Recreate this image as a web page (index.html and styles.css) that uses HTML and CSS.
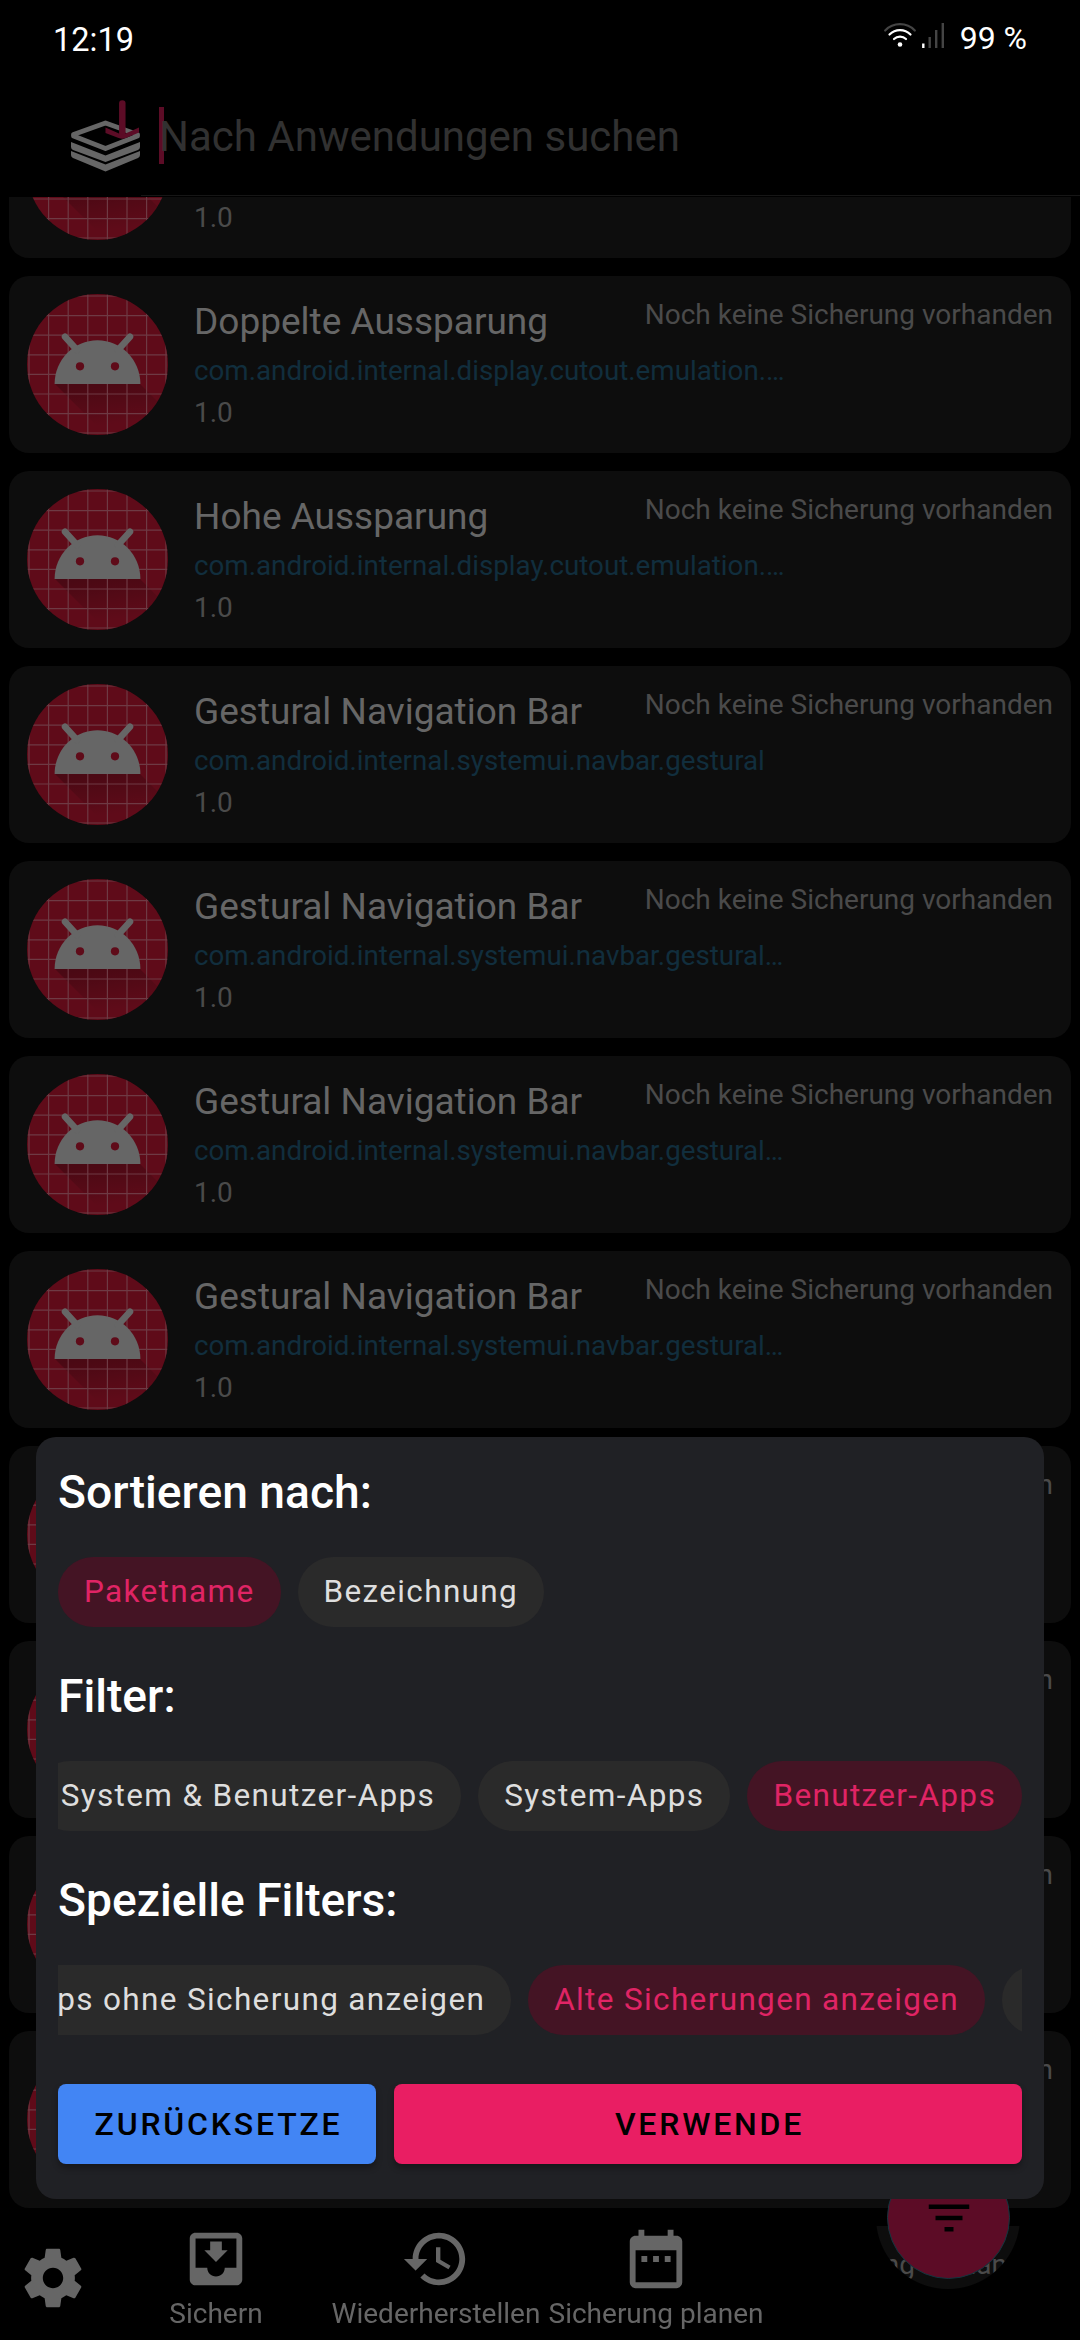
FILE: index.html
```html
<!DOCTYPE html>
<html lang="de">
<head>
<meta charset="utf-8">
<title>Sicherung</title>
<link rel="stylesheet" href="styles.css">
</head>
<body>
<svg class="defs" width="0" height="0">
  <defs>
    <clipPath id="round"><circle cx="70.5" cy="70.5" r="70.5"/></clipPath>
    <linearGradient id="shade" x1="0.3" y1="0" x2="0.5" y2="0.8"><stop offset="0" stop-color="#000" stop-opacity=".22"/><stop offset="1" stop-color="#000" stop-opacity="0"/></linearGradient>
    <symbol id="droid" viewBox="0 0 141 141">
      <g clip-path="url(#round)">
        <rect width="141" height="141" fill="#5f0b19"/>
        <path d="M28 90L79 141H141V118L113 90Z" fill="url(#shade)"/>
        <path d="M2 0V141M21.6 0V141M41.2 0V141M60.8 0V141M80.4 0V141M100 0V141M119.6 0V141M139 0V141M0 2H141M0 21.6H141M0 41.2H141M0 60.8H141M0 80.4H141M0 100H141M0 119.6H141M0 139H141" stroke="#6e3a44" stroke-width="1.2" fill="none"/>
      </g>
      <path d="M27.6 90C27.6 66 46.800 46.300 70.500 46.300S113.400 66 113.400 90Z" fill="#666"/>
      <path d="M38 42.700L50 56M103 42.700L91 56" stroke="#666" stroke-width="6.500" stroke-linecap="round"/>
      <circle cx="53" cy="72.300" r="4.100" fill="#5f0b19"/><circle cx="88" cy="72.300" r="4.100" fill="#5f0b19"/>
    </symbol>
  </defs>
</svg>
<div class="screen">
  <header class="status">
    <span class="clock">12:19</span>
    <svg class="radio" width="62" height="28" viewBox="0 0 62 28" fill="none" stroke-linecap="round">
      <path d="M1.200 8.500A20.500 20.500 0 0 1 30.800 8.500" stroke="#444" stroke-width="2.200"/>
      <path d="M5.500 12.500A14.800 14.800 0 0 1 26.500 12.500M10 17A8.600 8.600 0 0 1 22 17" stroke="#fff" stroke-width="2.200"/>
      <circle cx="16" cy="22.500" r="2.300" fill="#fff"/>
      <path d="M39.300 21.500V26" stroke="#fff" stroke-width="2.400" stroke-linecap="butt"/>
      <path d="M45.700 15V26M52.200 8V26M58.800 1V26" stroke="#444" stroke-width="2.400" stroke-linecap="butt"/>
    </svg>
    <span class="battery">99 %</span>
  </header>
  <div class="search">
    <svg class="logo" width="72" height="72" viewBox="0 0 72 72" fill="none">
      <path d="M3.500 36V34.500L35.500 23L67.500 34.500V36L35.500 48.500Z" stroke="#666" stroke-width="4.800" stroke-linejoin="round"/>
      <path d="M1 42L35.500 55.500L70 42V47Q70 49 68 50L35.500 62L3 50Q1 49 1 47Z" fill="#666"/>
      <path d="M1 51L35.500 64.500L70 51V55Q70 57 68 58L35.500 71.500L3 58Q1 57 1 55Z" fill="#666"/>
      <path d="M52.300 3.500V34" stroke="#5c0c26" stroke-width="6.500" stroke-linecap="round"/>
      <path d="M35.500 27.500L49 33.500Q52.300 35 55.600 33.500L69 27.500V32.500L56 38Q52.300 39.300 48.600 38L35.500 33Z" fill="#5c0c26"/>
    </svg>
    <span class="cursor"></span><span class="hint">Nach Anwendungen suchen</span>
  </div>
  <main class="list">
    <article class="card"><svg class="avatar"><use href="#droid"/></svg><div class="info tail"><p class="ver">1.0</p></div></article>
    <article class="card"><svg class="avatar"><use href="#droid"/></svg><div class="info"><h2>Doppelte Aussparung</h2><p class="pkg">com.android.internal.display.cutout.emulation.…</p><p class="ver">1.0</p></div><p class="note">Noch keine Sicherung vorhanden</p></article>
    <article class="card"><svg class="avatar"><use href="#droid"/></svg><div class="info"><h2>Hohe Aussparung</h2><p class="pkg">com.android.internal.display.cutout.emulation.…</p><p class="ver">1.0</p></div><p class="note">Noch keine Sicherung vorhanden</p></article>
    <article class="card"><svg class="avatar"><use href="#droid"/></svg><div class="info"><h2>Gestural Navigation Bar</h2><p class="pkg">com.android.internal.systemui.navbar.gestural</p><p class="ver">1.0</p></div><p class="note">Noch keine Sicherung vorhanden</p></article>
    <article class="card"><svg class="avatar"><use href="#droid"/></svg><div class="info"><h2>Gestural Navigation Bar</h2><p class="pkg">com.android.internal.systemui.navbar.gestural…</p><p class="ver">1.0</p></div><p class="note">Noch keine Sicherung vorhanden</p></article>
    <article class="card"><svg class="avatar"><use href="#droid"/></svg><div class="info"><h2>Gestural Navigation Bar</h2><p class="pkg">com.android.internal.systemui.navbar.gestural…</p><p class="ver">1.0</p></div><p class="note">Noch keine Sicherung vorhanden</p></article>
    <article class="card"><svg class="avatar"><use href="#droid"/></svg><div class="info"><h2>Gestural Navigation Bar</h2><p class="pkg">com.android.internal.systemui.navbar.gestural…</p><p class="ver">1.0</p></div><p class="note">Noch keine Sicherung vorhanden</p></article>
    <article class="card"><svg class="avatar"><use href="#droid"/></svg><p class="note">Noch keine Sicherung vorhanden</p></article>
    <article class="card"><svg class="avatar"><use href="#droid"/></svg><p class="note">Noch keine Sicherung vorhanden</p></article>
    <article class="card"><svg class="avatar"><use href="#droid"/></svg><p class="note">Noch keine Sicherung vorhanden</p></article>
    <article class="card"><svg class="avatar"><use href="#droid"/></svg><p class="note">Noch keine Sicherung vorhanden</p></article>
    <article class="card"><p class="note">Noch keine Sicherung vorhanden</p></article>
  </main>
  <nav class="bar">
    <svg class="gear" width="70" height="70" viewBox="0 0 24 24" fill="#666"><path d="M19.430 12.980c.04-.32.07-.64.07-.98s-.03-.66-.07-.98l2.110-1.650c.19-.15.24-.42.12-.64l-2-3.460c-.12-.22-.39-.3-.61-.22l-2.490 1c-.52-.4-1.080-.73-1.690-.98l-.38-2.650C14.460 2.180 14.250 2 14 2h-4c-.25 0-.46.18-.49.42l-.38 2.650c-.61.25-1.170.59-1.690.98l-2.490-1c-.23-.09-.49 0-.61.22l-2 3.460c-.13.22-.07.49.12.64l2.110 1.650c-.04.32-.07.65-.07.98s.03.66.07.98l-2.110 1.650c-.19.15-.24.42-.12.64l2 3.460c.12.22.39.3.61.22l2.490-1c.52.4 1.080.73 1.690.98l.38 2.650c.03.24.24.42.49.42h4c.25 0 .46-.18.49-.42l.38-2.650c.61-.25 1.170-.59 1.690-.98l2.490 1c.23.09.49 0 .61-.22l2-3.460c.12-.22.07-.49-.12-.64l-2.110-1.650zM12 15.500c-1.930 0-3.500-1.570-3.500-3.500s1.570-3.500 3.500-3.500 3.500 1.570 3.500 3.500-1.570 3.500-3.500 3.500z"/></svg>
    <div class="tabs">
      <a class="tab"><svg width="70" height="70" viewBox="0 0 24 24" fill="#666"><path d="M16 9h-2V6h-4v3H8l4 4 4-4zm3-6H4.990C3.880 3 3 3.900 3 5v14c0 1.100.88 2 1.990 2H19c1.100 0 2-.9 2-2V5c0-1.100-.9-2-2-2zm0 12h-4c0 1.660-1.350 3-3 3s-3-1.340-3-3H4.990V5H19v10z"/></svg>Sichern</a>
      <a class="tab"><svg width="70" height="70" viewBox="0 0 24 24" fill="#666"><path d="M13 3c-4.970 0-9 4.030-9 9H1l3.890 3.890.07.14L9 12H6c0-3.870 3.130-7 7-7s7 3.130 7 7-3.130 7-7 7c-1.930 0-3.680-.79-4.940-2.060l-1.420 1.420C8.270 19.990 10.510 21 13 21c4.970 0 9-4.030 9-9s-4.030-9-9-9zm-1 5v5l4.280 2.540.72-1.210-3.500-2.080V8H12z"/></svg>Wiederherstellen</a>
      <a class="tab"><svg width="70" height="70" viewBox="0 0 24 24" fill="#666"><path d="M9 11H7v2h2v-2zm4 0h-2v2h2v-2zm4 0h-2v2h2v-2zm2-7h-1V2h-2v2H8V2H6v2H5c-1.110 0-1.990.9-1.990 2L3 20c0 1.100.89 2 2 2h14c1.100 0 2-.9 2-2V6c0-1.100-.9-2-2-2zm0 16H5V9h14v11z"/></svg>Sicherung planen</a>
    </div>
  </nav>
  <div class="fab"><svg width="54" height="54" viewBox="0 0 24 24"><path d="M10 18h4v-2h-4v2zM3 6v2h18V6H3zm3 7h12v-2H6v2z"/></svg></div>
  <section class="sheet">
    <h3>Sortieren nach:</h3>
    <div class="chips"><span class="chip on">Paketname</span><span class="chip">Bezeichnung</span></div>
    <h3>Filter:</h3>
    <div class="chips end"><span class="chip">System &amp; Benutzer-Apps</span><span class="chip">System-Apps</span><span class="chip on">Benutzer-Apps</span></div>
    <h3>Spezielle Filters:</h3>
    <div class="chips end"><span class="chip">Apps ohne Sicherung anzeigen</span><span class="chip on">Alte Sicherungen anzeigen</span><span class="chip cut"></span></div>
    <div class="actions"><button class="btn reset">ZURÜCKSETZE</button><button class="btn apply">VERWENDE</button></div>
  </section>
</div>
</body>
</html>
```
FILE: styles.css
```css
* { box-sizing: border-box; margin: 0; padding: 0; }
body { background: #000; font-family: Roboto, sans-serif; }
.defs { display: block; height: 0; }
.screen { position: relative; width: 1080px; height: 2340px; overflow: hidden; background: #000; display: flex; flex-direction: column; }

.status { height: 76px; flex: none; display: flex; align-items: center; color: #fff; font-size: 32px; line-height: 38px; padding: 1px 53px 0 53px; }
.radio { margin-left: auto; margin-top: -5px; }
.clock { font-size: 32.5px; margin-top: 2px; }
.battery { margin-left: 14px; margin-top: -1px; }

.search { height: 121px; flex: none; display: flex; align-items: center; padding: 0 0 2px 70px; position: relative; }
.search::after { content: ""; position: absolute; left: 141px; right: 0; bottom: 1px; height: 1px; background: #161616; }
.logo { margin-top: 1px; }
.cursor { width: 5px; height: 57px; margin-left: 17px; background: #5c0c26; }
.hint { margin-left: -5px; font-size: 42px; line-height: 50px; color: #313131; white-space: nowrap; margin-top: 3px; }

.list { height: 2143px; overflow: hidden; display: flex; flex-direction: column; justify-content: flex-start; gap: 18px; padding: 0 9px; }
.card { flex: none; height: 177px; background: #0d0d0d; border-radius: 20px; padding: 18px; display: flex; gap: 26px; }
.card:first-child { margin-top: -116px; }
.avatar { width: 141px; height: 141px; flex: none; }
.info { flex: 1; min-width: 0; white-space: nowrap; }
.info h2 { font-size: 37px; line-height: 44px; font-weight: 400; color: #666; margin-top: 6px; }
.info p { font-size: 28px; line-height: 42px; }
.info .pkg { color: #112e3d; margin-top: 6px; font-size: 27.75px; }
.info .ver { color: #4a4a4a; }
.tail { align-self: flex-end; margin-bottom: 1px; }
.note { font-size: 28px; line-height: 34px; color: #4a4a4a; white-space: nowrap; margin-left: auto; margin-top: 4px; }
.info + .note { margin-left: -300px; }

.bar { position: absolute; left: 0; right: 0; bottom: 0; height: 114px; padding-left: 18px; display: flex; background: #000; -webkit-mask: radial-gradient(circle at 948px -9px, transparent 71.500px, #000 72.500px); mask: radial-gradient(circle at 948px -9px, transparent 71.500px, #000 72.500px); }
.gear { margin-top: 17px; flex: none; }
.tabs { display: flex; margin-left: 18px; margin-top: -2px; }
.tab { width: 220px; display: flex; flex-direction: column; align-items: center; white-space: nowrap; font-size: 28px; line-height: 36px; color: #666; gap: 2px; }
.fab { position: absolute; left: 887px; top: 2156px; width: 123px; height: 123px; border-radius: 50%; background: #5c0c26; border: 1px solid #12363f; display: grid; place-items: center; }

.sheet { position: absolute; left: 36px; top: 1437px; width: 1008px; height: 762px; background: #202125; border-radius: 20px; padding: 24px 22px 0; }
.sheet h3 { color: #fff; font-weight: 500; font-size: 46.2px; line-height: 62px; margin-bottom: 34px; }
.chips { display: flex; gap: 17px; overflow: hidden; margin-bottom: 38px; white-space: nowrap; height: 70px; }
.end { justify-content: flex-end; }
.chip { flex: none; height: 70px; border-radius: 35px; background: #2a2a2a; color: #dedede; padding: 0 26px; font-size: 31.5px; line-height: 70px; letter-spacing: 1.35px; }
.chip.on { background: #441424; color: #e02465; }
.chip.cut { width: 70px; margin-right: -50px; }
.actions { display: flex; gap: 18px; margin-top: 49px; }
.btn { height: 80px; border: 0; border-radius: 8px; padding-left: 3px; font: 500 32px/80px Roboto, sans-serif; letter-spacing: 2.800px; color: #000; box-shadow: 0 4px 6px rgba(0,0,0,.3); }
.reset { width: 318px; background: #4285f4; }
.apply { flex: 1; background: #e91e63; }
```
